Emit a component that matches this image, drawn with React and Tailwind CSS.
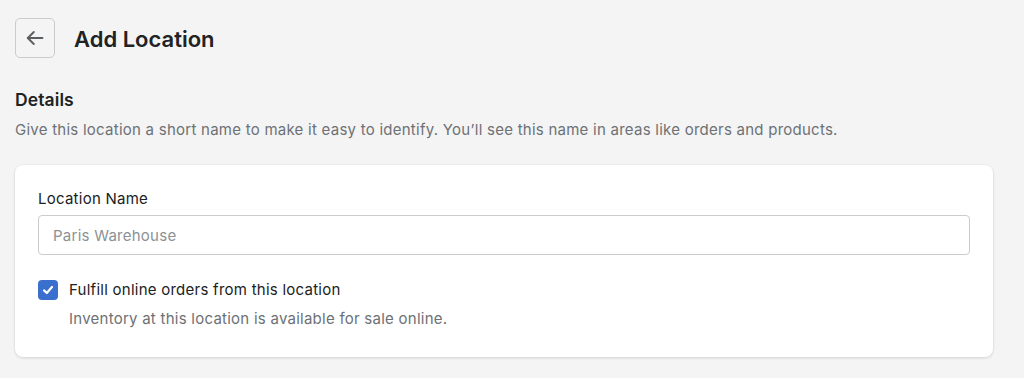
import React, { useState } from "react";

export default function App() {
  const [name, setName] = useState("");
  const [fulfill, setFulfill] = useState(true);

  return (
    <div className="min-h-[378px] bg-[#f4f4f4] pl-[15px] pr-[31px] pt-[18px] font-['Inter',sans-serif] text-[#202223]">
      <div className="flex items-center gap-[19px]">
        <button className="flex h-10 w-10 items-center justify-center rounded-[5px] border border-[#c9cccf] bg-transparent text-[#5c5f62]">
          <svg width="20" height="20" viewBox="0 0 20 20" fill="none" stroke="currentColor" strokeWidth="1.9" strokeLinecap="round" strokeLinejoin="round">
            <path d="M17.5 10H2.8" />
            <path d="M8.8 4 2.8 10l6 6" />
          </svg>
        </button>
        <h1 className="mt-[2px] text-[22px] font-semibold leading-none">Add Location</h1>
      </div>

      <div className="mt-[31px]">
        <h2 className="text-[17.5px] font-semibold leading-[22px] tracking-[0.1px]">Details</h2>
        <p className="mt-[9px] text-[15px] leading-[20px] tracking-[0.25px] text-[#6d7175]">
          Give this location a short name to make it easy to identify. You’ll see this name in areas like orders and products.
        </p>
      </div>

      <div className="mt-[25px] rounded-[8px] bg-white px-[23px] pt-[24px] pb-[28px] shadow-[0_1px_3px_rgba(0,0,0,0.12),0_0_0_1px_rgba(0,0,0,0.02)]">
        <label className="block text-[15px] leading-[20px] tracking-[0.25px] text-[#202223]">Location Name</label>
        <input
          value={name}
          onChange={(e) => setName(e.target.value)}
          placeholder="Paris Warehouse"
          className="mt-[6px] block h-10 w-full rounded-[4px] border border-[#c9cccf] bg-white px-[14px] text-[15px] tracking-[0.25px] text-[#202223] placeholder-[#8c9196] outline-none"
        />
        <label className="mt-[25px] flex cursor-pointer items-start gap-[11px]">
          <span
            onClick={() => setFulfill(!fulfill)}
            className={
              fulfill
                ? "flex h-5 w-5 shrink-0 items-center justify-center rounded-[4px] bg-[#3b6fcd]"
                : "flex h-5 w-5 shrink-0 items-center justify-center rounded-[4px] border border-[#8c9196] bg-white"
            }
          >
            {fulfill && (
              <svg width="14" height="14" viewBox="0 0 14 14" fill="none" stroke="white" strokeWidth="2.2" strokeLinecap="round" strokeLinejoin="round">
                <path d="M3 7.4 5.8 10 11 4" />
              </svg>
            )}
          </span>
          <span>
            <span className="block text-[15px] leading-[20px] tracking-[0.25px] text-[#202223]">Fulfill online orders from this location</span>
            <span className="mt-[9px] block text-[15px] leading-[20px] tracking-[0.25px] text-[#6d7175]">
              Inventory at this location is available for sale online.
            </span>
          </span>
        </label>
      </div>
    </div>
  );
}
